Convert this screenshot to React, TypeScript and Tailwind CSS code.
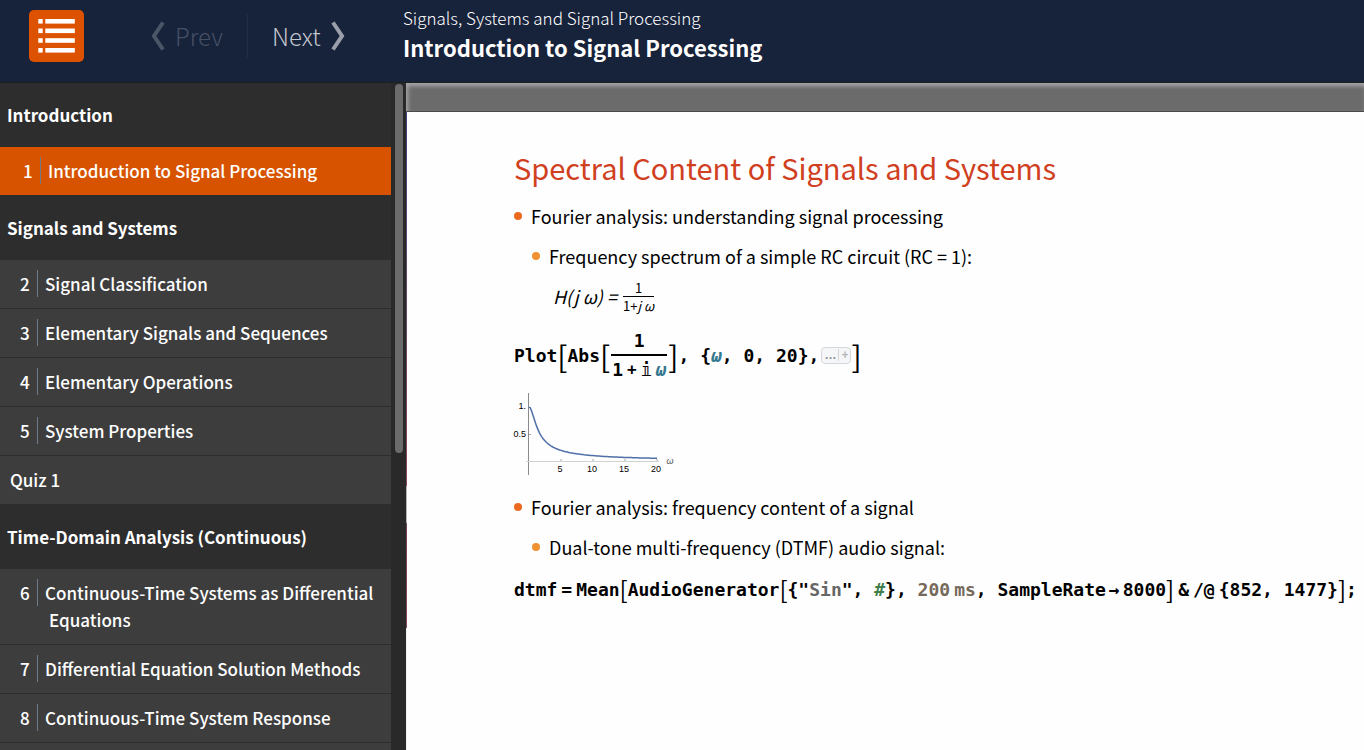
import type { ReactNode } from "react";
import clsx from "clsx";

type Lesson = { number?: number; title: string; active?: boolean };
type Section = { heading: string; lessons: Lesson[] };

const sections: Section[] = [
  {
    heading: "Introduction",
    lessons: [{ number: 1, title: "Introduction to Signal Processing", active: true }],
  },
  {
    heading: "Signals and Systems",
    lessons: [
      { number: 2, title: "Signal Classification" },
      { number: 3, title: "Elementary Signals and Sequences" },
      { number: 4, title: "Elementary Operations" },
      { number: 5, title: "System Properties" },
      { title: "Quiz 1" },
    ],
  },
  {
    heading: "Time-Domain Analysis (Continuous)",
    lessons: [
      { number: 6, title: "Continuous-Time Systems as Differential Equations" },
      { number: 7, title: "Differential Equation Solution Methods" },
      { number: 8, title: "Continuous-Time System Response" },
    ],
  },
];

function Header() {
  return (
    <header className="flex h-[83px] shrink-0 items-start border-b border-[#1f1f1f] bg-[#17223b] text-white">
      <div className="flex w-[403px] shrink-0 items-center pt-[10px] pl-[29px]">
        <button
          aria-label="Contents"
          className="flex h-[52px] w-[55px] items-center justify-center rounded-[5px] bg-[#dd5200]"
        >
          <svg width="37" height="36" viewBox="0 0 37 36" fill="white">
            {[1, 10.5, 20.2, 30].map((y) => (
              <g key={y}>
                <rect x="0.3" y={y} width="4.4" height="4.6" />
                <rect x="7.3" y={y} width="29.5" height="4.6" />
              </g>
            ))}
          </svg>
        </button>
        <button
          disabled
          className="ml-[66px] flex h-11 items-center gap-[9px] border-r border-[#222d45] pr-6 text-[24px] leading-none font-light text-[#465065]"
        >
          <svg width="16" height="30" viewBox="0 0 16 30" fill="none" stroke="#4b5568" strokeWidth="4">
            <path d="M13 1.5 L4 15 L13 28.5" />
          </svg>
          Prev
        </button>
        <button className="flex h-11 items-center gap-[9px] pl-6 text-[24px] leading-none font-light text-[#c3c7ce]">
          Next
          <svg width="16" height="30" viewBox="0 0 16 30" fill="none" stroke="#9a9fab" strokeWidth="4">
            <path d="M3 1.5 L12 15 L3 28.5" />
          </svg>
        </button>
      </div>
      <div className="pt-1">
        <p className="text-[17px] leading-[27px] font-light">Signals, Systems and Signal Processing</p>
        <h1 className="text-[22px] leading-[32px] font-bold">Introduction to Signal Processing</h1>
      </div>
    </header>
  );
}

function LessonLink({ lesson }: { lesson: Lesson }) {
  return (
    <li className="border-b border-[#2d2d2d]">
      <a
        href="#"
        className={clsx(
          "flex pt-[10px] pb-[11px] text-[17px] leading-[27px] font-medium text-white",
          lesson.active ? "bg-[#d75300] pl-[23px]" : "bg-[#3d3d3d]",
          !lesson.active && (lesson.number ? "pl-5" : "pl-[10px]")
        )}
      >
        {lesson.number && (
          <span className="mr-[7px] h-[27px] w-[18px] shrink-0 border-r border-[#6e7b8b]">{lesson.number}</span>
        )}
        <span className={clsx(lesson.number && "pl-1 -indent-1")}>{lesson.title}</span>
      </a>
    </li>
  );
}

function Sidebar() {
  return (
    <aside className="flex w-[406px] shrink-0 overflow-hidden bg-[#2d2d2d]">
      <nav className="flex w-[391px] shrink-0 flex-col" aria-label="Lessons">
        {sections.map((section) => (
          <section key={section.heading}>
            <h2 className="px-[7px] py-[18px] text-[17px] leading-[28px] font-bold text-white">
              {section.heading}
            </h2>
            <ul>
              {section.lessons.map((lesson) => (
                <LessonLink key={lesson.title} lesson={lesson} />
              ))}
            </ul>
          </section>
        ))}
        <div className="flex-1 bg-[#3d3d3d]" />
      </nav>
      <div className="flex-1 bg-[#292929] pt-px pl-1">
        <div className="h-[369px] w-2 rounded-full bg-[#6b6b6b]" />
      </div>
    </aside>
  );
}

function Bullet({ nested, children }: { nested?: boolean; children: ReactNode }) {
  return (
    <div className={clsx("flex h-10 items-center gap-[9px] text-[18px] leading-[26px]", nested && "pl-[18px]")}>
      <span className={clsx("h-2 w-2 shrink-0 rounded-full", nested ? "bg-[#ef922f]" : "bg-[#ec6a20]")} />
      <span>{children}</span>
    </div>
  );
}

function Bracket({ tall, children }: { tall?: boolean; children: string }) {
  return (
    <span
      className={clsx(
        "font-['Noto_Sans_CJK_SC','Noto_Sans',sans-serif] font-normal",
        tall ? "text-[30px] leading-[40px]" : "text-[24px] leading-[30px]"
      )}
    >
      {children}
    </span>
  );
}

const codeFont = "flex items-center whitespace-pre font-['DejaVu_Sans_Mono',monospace] text-[18px] font-bold";

// |H(jw)| of the RC circuit, 6.4px per rad and 54px per unit of gain
const curve = Array.from({ length: 101 }, (_, i) => {
  const w = i / 5;
  return `${(19 + w * 6.4).toFixed(1)},${(69 - 54 / Math.sqrt(1 + w * w)).toFixed(1)}`;
}).join(" ");

function ResponsePlot() {
  return (
    <svg
      width="170"
      height="86"
      viewBox="0 0 170 86"
      className="-ml-1 font-['Liberation_Sans',Arial,sans-serif] text-[9px]"
      role="img"
      aria-label="Magnitude response"
    >
      <path d="M18.5 1 V83" stroke="#8a8a8a" />
      <path d="M16 69.5 H149" stroke="#d2d2d2" />
      <path d="M51 67 V69 M83 67 V69 M115 67 V69 M147 67 V69 M19 42.5 H21 M19 15.5 H21" stroke="#aaa" />
      <polyline points={curve} fill="none" stroke="#4f70a8" strokeWidth="1.5" />
      <g textAnchor="end">
        <text x="16" y="17">1.</text>
        <text x="16" y="45">0.5</text>
      </g>
      <g textAnchor="middle">
        <text x="50" y="80">5</text>
        <text x="82" y="80">10</text>
        <text x="114" y="80">15</text>
        <text x="146" y="80">20</text>
        <text x="160" y="72" fontStyle="italic" fill="#555">ω</text>
      </g>
    </svg>
  );
}

function Notebook() {
  return (
    <div className="flex min-h-0 flex-1 overflow-hidden bg-[#fefefe] text-black">
      <div className="w-px shrink-0 bg-[linear-gradient(#45457e_0px,#8a4a5c_374px,#b5b5b5_374px,#b5b5b5_411px,#74405a_411px,#8a4a5c_516px,#f2f2f2_516px)]" />
      <article className="min-w-0 flex-1 pt-[33px] pl-[107px]">
        <h2 className="text-[29px] leading-[44px] text-[#d0401f]">Spectral Content of Signals and Systems</h2>
        <div className="mt-[7px]">
          <Bullet>Fourier analysis: understanding signal processing</Bullet>
          <Bullet nested>Frequency spectrum of a simple RC circuit (RC = 1):</Bullet>
        </div>
        <div className="flex h-10 items-center pl-[39px] text-[18px] italic">
          H(j ω) =
          <span className="ml-[6px] flex flex-col text-center text-[13px] leading-[17px]">
            <span className="border-b border-black not-italic">1</span>
            <span><span className="not-italic">1+</span>j ω</span>
          </span>
        </div>
        <div className={clsx(codeFont, "h-[76px] pt-[2px]")}>
          Plot<Bracket tall>[</Bracket>Abs<Bracket tall>[</Bracket>
          <span className="mx-px flex flex-col text-center leading-[27px]">
            <span className="border-b-2 border-black">1</span>
            <span className="flex items-center justify-center gap-1 px-px">
              1<span className="text-[16px]">+</span>𝕚<i className="text-[#35788f]">ω</i>
            </span>
          </span>
          <Bracket tall>]</Bracket>, {"{"}<i className="text-[#35788f]">ω</i>{", 0, 20},"}
          <button
            aria-label="Show options"
            className="ml-[2px] flex h-[17px] w-[30px] items-center rounded-[4px] border border-[#d5d7da] bg-[#f5f6f8] font-['Liberation_Sans',sans-serif] text-[12px] leading-none text-[#8e959c]"
          >
            <span className="flex-1 border-r border-[#d5d7da]">…</span>
            <span className="w-[11px] text-[#b4b8bd]">+</span>
          </button>
          <Bracket tall>]</Bracket>
        </div>
        <ResponsePlot />
        <div className="mt-[9px]">
          <Bullet>Fourier analysis: frequency content of a signal</Bullet>
          <Bullet nested>Dual-tone multi-frequency (DTMF) audio signal:</Bullet>
        </div>
        <div className={clsx(codeFont, "h-11")}>
          dtmf<span className="px-1">=</span>Mean<Bracket>[</Bracket>AudioGenerator<Bracket>[</Bracket>
          {'{"'}<span className="text-[#666]">Sin</span>{'", '}
          <i className="text-[#3f7f4c]">#</i>{"}, "}
          <span className="text-[#75695a]">200</span><span className="pl-1 text-[#75695a]">ms</span>
          {", SampleRate"}<span className="px-[3px]">→</span>8000<Bracket>]</Bracket>
          <span className="pl-1">&amp;</span><span className="px-1">/@</span>
          {"{852, 1477}"}<Bracket>]</Bracket>;
        </div>
      </article>
    </div>
  );
}

export default function App() {
  return (
    <div className="flex h-screen flex-col overflow-hidden bg-[#292929] font-['Noto_Sans_CJK_SC','Noto_Sans',sans-serif]">
      <Header />
      <div className="flex min-h-0 flex-1">
        <Sidebar />
        <main className="flex min-w-0 flex-1 flex-col">
          <div className="h-[29px] shrink-0 border-b border-[#4a4a4a] bg-[#6b6b6b] shadow-[inset_2px_3px_4px_#a8a8a8]" />
          <Notebook />
        </main>
      </div>
    </div>
  );
}
